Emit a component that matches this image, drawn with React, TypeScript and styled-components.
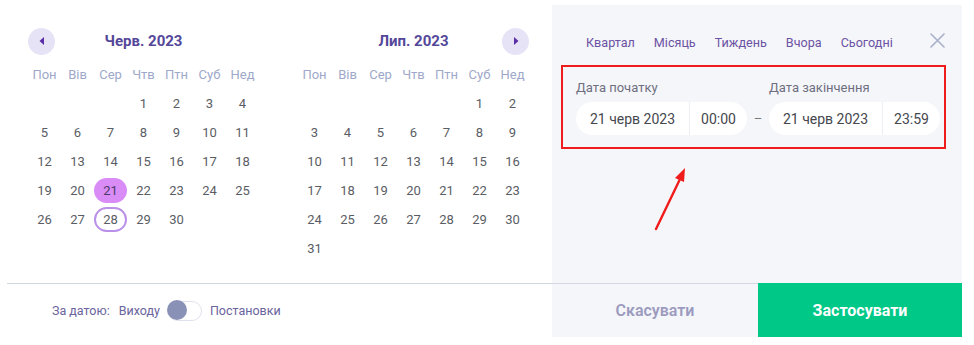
import React from "react"
import styled, { createGlobalStyle, css } from "styled-components"

const WEEKDAYS = ["Пон", "Вів", "Сер", "Чтв", "Птн", "Суб", "Нед"]
const PRESETS = ["Квартал", "Місяць", "Тиждень", "Вчора", "Сьогодні"]

type MonthProps = {
    title: string
    offset: number
    days: number
    nav: "prev" | "next"
    selected?: number
    outlined?: number
}

const Month = ({ title, offset, days, nav, selected, outlined }: MonthProps) => {
    const cells: (number | null)[] = []
    for (let i = 0; i < offset; i++) cells.push(null)
    for (let d = 1; d <= days; d++) cells.push(d)
    return (
        <MonthBox>
            <MonthHeader>
                {nav == "prev" ? (
                    <NavButton>
                        <svg width="8" height="10" viewBox="0 0 8 10">
                            <path d="M6 1 L1.5 5 L6 9 Z" fill="#5a2ea6" />
                        </svg>
                    </NavButton>
                ) : (
                    <NavSpacer />
                )}
                <MonthTitle>{title}</MonthTitle>
                {nav == "next" ? (
                    <NavButton>
                        <svg width="8" height="10" viewBox="0 0 8 10">
                            <path d="M2 1 L6.5 5 L2 9 Z" fill="#5a2ea6" />
                        </svg>
                    </NavButton>
                ) : (
                    <NavSpacer />
                )}
            </MonthHeader>
            <Grid>
                {WEEKDAYS.map(w => (
                    <WeekDay key={w}>{w}</WeekDay>
                ))}
                {cells.map((d, i) => (
                    <DayCell key={i}>
                        {d && (
                            <Day
                                $selected={d === selected}
                                $outlined={d === outlined}
                            >
                                {d}
                            </Day>
                        )}
                    </DayCell>
                ))}
            </Grid>
        </MonthBox>
    )
}

const DateInput = ({ date, time }: { date: string; time: string }) => (
    <Pill>
        <PillDate>{date}</PillDate>
        <PillTime>{time}</PillTime>
    </Pill>
)

const App = () => {
    return (
        <>
            <GlobalStyle />
            <Card>
                <LeftSide>
                    <Calendars>
                        <Month
                            title="Черв. 2023"
                            offset={3}
                            days={30}
                            nav="prev"
                            selected={21}
                            outlined={28}
                        />
                        <Month title="Лип. 2023" offset={5} days={31} nav="next" />
                    </Calendars>
                    <Footer>
                        <FooterText>За датою:</FooterText>
                        <FooterText>Виходу</FooterText>
                        <Toggle>
                            <Knob />
                        </Toggle>
                        <FooterText>Постановки</FooterText>
                    </Footer>
                </LeftSide>
                <RightSide>
                    <Panel>
                        <Presets>
                            {PRESETS.map(p => (
                                <Preset key={p}>{p}</Preset>
                            ))}
                            <Close>
                                <svg width="15" height="15" viewBox="0 0 15 15">
                                    <path
                                        d="M1 1 L14 14 M14 1 L1 14"
                                        stroke="#a9b0c9"
                                        strokeWidth="1.6"
                                        strokeLinecap="round"
                                    />
                                </svg>
                            </Close>
                        </Presets>
                        <RangeBox>
                            <RangeColumn>
                                <FieldLabel>Дата початку</FieldLabel>
                                <DateInput date="21 черв 2023" time="00:00" />
                            </RangeColumn>
                            <Dash>–</Dash>
                            <RangeColumn>
                                <FieldLabel>Дата закінчення</FieldLabel>
                                <DateInput date="21 черв 2023" time="23:59" />
                            </RangeColumn>
                        </RangeBox>
                        <Arrow width="40" height="70" viewBox="0 0 40 70">
                            <path
                                d="M5 64 L30 12"
                                stroke="#f01c1c"
                                strokeWidth="2.4"
                                strokeLinecap="round"
                            />
                            <path d="M34 3 L24 13 L33 17 Z" fill="#f01c1c" />
                        </Arrow>
                    </Panel>
                    <Buttons>
                        <CancelButton>Скасувати</CancelButton>
                        <ApplyButton>Застосувати</ApplyButton>
                    </Buttons>
                </RightSide>
            </Card>
        </>
    )
}

export default App

const GlobalStyle = createGlobalStyle`
    body {
        margin: 0;
        background: #ffffff;
        font-family: Roboto, "Noto Sans", sans-serif;
    }
`

const Card = styled.div`
    display: flex;
    margin: 5px 0 0 7px;
    width: 955px;
    height: 332px;
`

const LeftSide = styled.div`
    width: 545px;
    display: flex;
    flex-direction: column;
`

const Calendars = styled.div`
    flex: 1;
    display: flex;
    gap: 39px;
    padding: 23px 0 0 21px;
`

const MonthBox = styled.div`
    width: 231px;
`

const MonthHeader = styled.div`
    display: flex;
    align-items: center;
    justify-content: space-between;
    height: 26px;
    margin-bottom: 6px;
`

const NavButton = styled.div`
    width: 27px;
    height: 27px;
    border-radius: 50%;
    background: #e7e3f6;
    display: flex;
    align-items: center;
    justify-content: center;
`

const NavSpacer = styled.div`
    width: 27px;
`

const MonthTitle = styled.div`
    font-size: 15px;
    font-weight: 700;
    color: #54479a;
`

const Grid = styled.div`
    display: grid;
    grid-template-columns: repeat(7, 33px);
    grid-auto-rows: 29px;
`

const WeekDay = styled.div`
    display: flex;
    align-items: center;
    justify-content: center;
    font-size: 13px;
    color: #9ea8ca;
`

const DayCell = styled.div`
    display: flex;
    align-items: center;
    justify-content: center;
`

const Day = styled.div<{ $selected?: boolean; $outlined?: boolean }>`
    width: 33px;
    height: 25px;
    border-radius: 13px;
    display: flex;
    align-items: center;
    justify-content: center;
    font-size: 13px;
    color: #5a5d64;
    box-sizing: border-box;
    ${p =>
        p.$selected &&
        css`
            background: #d98cf6;
            color: #4a3a6a;
        `}
    ${p =>
        p.$outlined &&
        css`
            border: 2px solid #bb90e8;
        `}
`

const Footer = styled.div`
    height: 54px;
    border-top: 1.5px solid #d3d7e4;
    box-sizing: border-box;
    display: flex;
    align-items: center;
    gap: 8px;
    padding-left: 45px;
`

const FooterText = styled.span`
    font-size: 12.5px;
    color: #6a649c;
    &:first-child {
        margin-right: 1px;
    }
`

const Toggle = styled.div`
    width: 34px;
    height: 20px;
    border: 1.5px solid #dfe2ec;
    border-radius: 10px;
    box-sizing: border-box;
    background: #fff;
    position: relative;
`

const Knob = styled.div`
    position: absolute;
    left: -1.5px;
    top: -1.5px;
    width: 20px;
    height: 20px;
    border-radius: 50%;
    background: #8a91b6;
`

const RightSide = styled.div`
    width: 410px;
    display: flex;
    flex-direction: column;
    background: #f5f6fa;
`

const Panel = styled.div`
    flex: 1;
    position: relative;
    padding: 0 16px 0 9px;
`

const Presets = styled.div`
    display: flex;
    align-items: center;
    height: 30px;
    margin-top: 22px;
    padding-left: 25px;
    gap: 19px;
    position: relative;
`

const Preset = styled.span`
    font-size: 12.6px;
    color: #6b52a3;
`

const Close = styled.div`
    position: absolute;
    right: 1px;
    top: 6px;
    display: flex;
`

const RangeBox = styled.div`
    margin-top: 8px;
    height: 84px;
    box-sizing: border-box;
    border: 2px solid #ee1c1c;
    display: flex;
    align-items: flex-end;
    padding: 0 4px 12px 13px;
`

const RangeColumn = styled.div`
    display: flex;
    flex-direction: column;
`

const FieldLabel = styled.div`
    font-size: 13px;
    color: #6f6f80;
    margin-bottom: 7px;
`

const Dash = styled.div`
    width: 23px;
    height: 33px;
    display: flex;
    align-items: center;
    justify-content: center;
    font-size: 13px;
    color: #777;
`

const Pill = styled.div`
    display: flex;
    height: 33px;
    border-radius: 17px;
    background: #ffffff;
    overflow: hidden;
`

const PillDate = styled.div`
    width: 113px;
    display: flex;
    align-items: center;
    justify-content: center;
    font-size: 14px;
    color: #45474d;
    border-right: 1px solid #eceef3;
`

const PillTime = styled.div`
    width: 57px;
    display: flex;
    align-items: center;
    justify-content: center;
    font-size: 14px;
    color: #45474d;
`

const Arrow = styled.svg`
    position: absolute;
    left: 99px;
    top: 160px;
`

const Buttons = styled.div`
    display: flex;
    height: 54px;
`

const CancelButton = styled.div`
    width: 206px;
    border-top: 1.5px solid #d3d7e4;
    box-sizing: border-box;
    display: flex;
    align-items: center;
    justify-content: center;
    font-size: 16px;
    font-weight: 600;
    color: #9c9bbf;
`

const ApplyButton = styled.div`
    flex: 1;
    background: #00c887;
    display: flex;
    align-items: center;
    justify-content: center;
    font-size: 16px;
    font-weight: 700;
    color: #ffffff;
`
